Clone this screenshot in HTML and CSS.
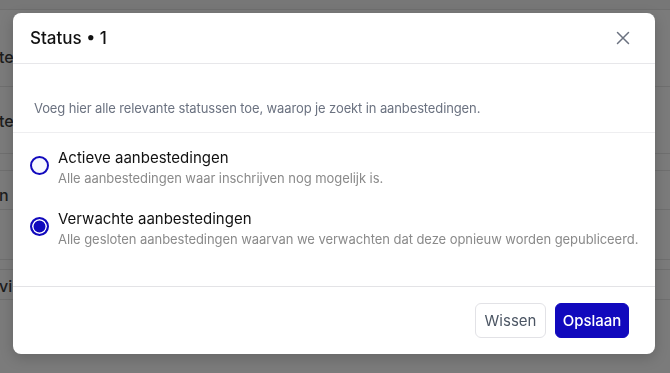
FILE: index.html
```html
<!DOCTYPE html>
<html lang="nl">
<head>
<meta charset="utf-8">
<title>Status</title>
<link rel="stylesheet" href="styles.css">
</head>
<body>
<div class="page">
  <div class="row r0"></div>
  <div class="row r1"><span class="cell">te</span></div>
  <div class="row r2"><span class="cell">te</span></div>
  <div class="row r3"></div>
  <div class="row r4"><span class="cell">n</span></div>
  <div class="row r5"></div>
  <div class="row r6"></div>
  <div class="row r7"><span class="cell">vi</span></div>
  <div class="row r8"></div>
</div>

<div class="modal" role="dialog">
  <header class="modal-header">
    <h2 class="modal-title">Status • 1</h2>
    <button class="close" aria-label="Sluiten">
      <svg width="14" height="14" viewBox="0 0 14 14"><path d="M1.5 1.5 L12.5 12.5 M12.5 1.5 L1.5 12.5" stroke="#6b7280" stroke-width="1.5" stroke-linecap="round" fill="none"/></svg>
    </button>
  </header>
  <div class="modal-intro">Voeg hier alle relevante statussen toe, waarop je zoekt in aanbestedingen.</div>
  <div class="modal-body">
    <label class="option">
      <span class="radio"></span>
      <span class="option-text">
        <span class="option-label">Actieve aanbestedingen</span>
        <span class="option-desc">Alle aanbestedingen waar inschrijven nog mogelijk is.</span>
      </span>
    </label>
    <label class="option">
      <span class="radio checked"></span>
      <span class="option-text">
        <span class="option-label">Verwachte aanbestedingen</span>
        <span class="option-desc">Alle gesloten aanbestedingen waarvan we verwachten dat deze opnieuw worden gepubliceerd.</span>
      </span>
    </label>
  </div>
  <footer class="modal-footer">
    <button class="btn btn-secondary">Wissen</button>
    <button class="btn btn-primary">Opslaan</button>
  </footer>
</div>
</body>
</html>
```

FILE: styles.css
```css
* { box-sizing: border-box; }
html, body { margin: 0; padding: 0; }
body {
  width: 670px;
  height: 373px;
  overflow: hidden;
  background: #7b7b7b;
  font-family: Inter, "Noto Sans", sans-serif;
}
.page { display: flex; flex-direction: column; }
.row {
  border-bottom: 1px solid #6f6f6f;
  display: flex;
  align-items: center;
  overflow: hidden;
}
.r0 { height: 10px; background: #777; }
.r1 { height: 77px; padding-top: 18px; }
.r2 { height: 67px; padding-top: 1px; }
.r3 { height: 17px; }
.r4 { height: 39px; padding-top: 10px; }
.r5 { height: 50px; }
.r6 { height: 10px; }
.r7 { height: 30px; padding-top: 2px; }
.r8 { height: 74px; border-bottom: 0; }
.cell {
  font-size: 16px;
  font-weight: 500;
  color: #1d1d1d;
  margin-left: -1px;
}

.modal {
  position: fixed;
  left: 13px;
  top: 13px;
  width: 642px;
  height: 341px;
  background: #fff;
  border-radius: 8px;
  box-shadow: 0 4px 14px rgba(0,0,0,0.18);
  display: flex;
  flex-direction: column;
}
.modal-header {
  height: 51px;
  border-bottom: 1px solid #e7e7ea;
  display: flex;
  align-items: center;
  justify-content: space-between;
  padding: 0 25px 0 17px;
}
.modal-title {
  margin: 0;
  font-size: 17px;
  font-weight: 500;
  color: #111;
}
.close {
  background: none;
  border: 0;
  padding: 0;
  width: 14px;
  height: 14px;
  display: flex;
}
.modal-intro {
  height: 69px;
  border-bottom: 1px solid #eeeef0;
  padding: 35px 21px 0;
  font-size: 13px;
  letter-spacing: -0.12px;
  color: #6b7280;
  line-height: 18px;
}
.modal-body {
  flex: 1;
  border-bottom: 1px solid #e3e3e6;
  padding: 14px 17px 0;
  display: flex;
  flex-direction: column;
  gap: 19px;
}
.option {
  display: flex;
  align-items: flex-start;
  gap: 9px;
}
.radio {
  width: 19px;
  height: 19px;
  border-radius: 50%;
  border: 2px solid #1109bd;
  background: #f6f7ff;
  flex: none;
  margin-top: 9px;
}
.radio.checked {
  background: #1109bd;
  box-shadow: inset 0 0 0 1.5px #fff;
}
.option-text { display: flex; flex-direction: column; white-space: nowrap; }
.option-label {
  font-size: 15px;
  color: #111;
  line-height: 21px;
}
.option-desc {
  font-size: 13px;
  letter-spacing: -0.06px;
  color: #8a8a8a;
  line-height: 21px;
}
.modal-footer {
  height: 67px;
  display: flex;
  align-items: center;
  justify-content: flex-end;
  gap: 9px;
  padding: 0 26px 0 0;
}
.btn {
  height: 35px;
  border-radius: 6px;
  font-family: Inter, "Noto Sans", sans-serif;
  font-size: 15px;
  padding: 0;
  cursor: pointer;
}
.btn-secondary {
  width: 71px;
  background: #fff;
  border: 1px solid #e2e2e6;
  color: #4b5563;
}
.btn-primary {
  width: 74px;
  background: #1109bd;
  border: 1px solid #1109bd;
  color: #fff;
  font-weight: 500;
}
```
